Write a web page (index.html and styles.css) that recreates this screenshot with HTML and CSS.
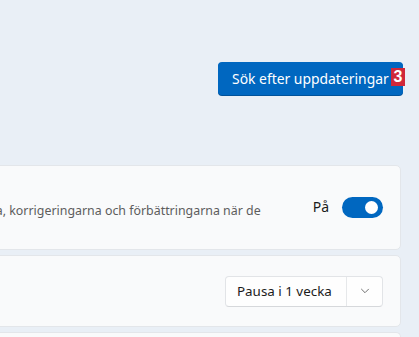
FILE: index.html
```html
<!DOCTYPE html>
<html lang="sv">
<head>
<meta charset="utf-8">
<link rel="stylesheet" href="styles.css">
</head>
<body>
<div class="page">
  <header class="top">
    <div class="btn-wrap">
      <button class="primary">Sök efter uppdateringar</button>
      <span class="badge">3</span>
    </div>
  </header>
  <section class="cards">
    <div class="card card-first">
      <div class="desc"><span>Var bland de första att få de senaste icke-säkerhetsuppdateringarna, korrigeringarna och förbättringarna när de</span></div>
      <div class="toggle-group">
        <span class="state">På</span>
        <span class="toggle"><span class="knob"></span></span>
      </div>
    </div>
    <div class="card card-second">
      <div class="combo">
        <span class="combo-label">Pausa i 1 vecka</span>
        <span class="combo-arrow">
          <svg width="10" height="6" viewBox="0 0 10 6"><path d="M1.5 1.2l3.5 3.5 3.5-3.5" fill="none" stroke="#707070" stroke-width="1" stroke-linecap="round" stroke-linejoin="round"/></svg>
        </span>
      </div>
    </div>
    <div class="card card-third"></div>
  </section>
</div>
</body>
</html>
```
FILE: styles.css
```css
html, body {
  margin: 0;
  padding: 0;
}
body {
  width: 419px;
  height: 337px;
  overflow: hidden;
  background: #e9eff6;
  font-family: "Segoe UI", "Noto Sans", "Liberation Sans", sans-serif;
  color: #1b1b1b;
}
.page {
  display: flex;
  flex-direction: column;
}
.top {
  height: 165px;
  display: flex;
  justify-content: flex-end;
  align-items: flex-start;
  padding: 62px 16px 0 0;
  box-sizing: border-box;
}
.btn-wrap {
  position: relative;
}
.primary {
  display: block;
  width: 185px;
  height: 33px;
  border: none;
  border-radius: 4px;
  background: #0067c0;
  color: #ffffff;
  font-family: inherit;
  font-size: 13.9px;
  white-space: nowrap;
  padding: 0 10px 1px 14px;
  text-align: left;
  box-shadow: 0 1px 0 #00529a;
}
.badge {
  position: absolute;
  left: 173px;
  top: 6px;
  width: 14px;
  height: 18px;
  background: #d0283a;
  color: #fff;
  font-family: "Liberation Sans", Arial, sans-serif;
  font-weight: bold;
  font-size: 16px;
  line-height: 18px;
  text-align: center;
}
.cards {
  display: flex;
  flex-direction: column;
  gap: 5px;
  margin: 0 18px 0 -20px;
}
.card {
  background: #f9fafb;
  border: 1px solid #e3e6ea;
  border-radius: 5px;
  box-sizing: border-box;
  display: flex;
  align-items: center;
}
.card-first {
  height: 85px;
  padding: 0 17px 0 0;
}
.desc {
  flex: 1;
  min-width: 0;
  display: flex;
  justify-content: flex-end;
  overflow: hidden;
  padding: 5px 52px 0 0;
}
.desc span {
  white-space: nowrap;
  font-size: 12.4px;
  color: #5d5d5d;
}
.toggle-group {
  display: flex;
  align-items: center;
  gap: 13px;
}
.state {
  font-size: 14px;
  color: #1b1b1b;
  padding-bottom: 2px;
}
.toggle {
  width: 41px;
  height: 21px;
  border-radius: 11px;
  background: #0067c0;
  display: flex;
  align-items: center;
  justify-content: flex-end;
  padding-right: 5px;
  box-sizing: border-box;
}
.knob {
  width: 13px;
  height: 13px;
  border-radius: 50%;
  background: #ffffff;
}
.card-second {
  height: 72px;
  justify-content: flex-end;
  padding: 0 17px 0 0;
}
.combo {
  display: flex;
  align-items: stretch;
  height: 31px;
  background: #fefefe;
  border: 1px solid #e2e4e7;
  border-bottom-color: #d6d8db;
  border-radius: 4px;
  box-sizing: border-box;
}
.combo-label {
  display: flex;
  align-items: center;
  width: 121px;
  box-sizing: border-box;
  padding: 0 0 1px 11px;
  font-size: 13.4px;
  white-space: nowrap;
  color: #1b1b1b;
  border-right: 1px solid #e6e8ea;
}
.combo-arrow {
  width: 35px;
  display: flex;
  align-items: center;
  justify-content: center;
}
.card-third {
  height: 5px;
  border-bottom: none;
  border-radius: 5px 5px 0 0;
}
```
